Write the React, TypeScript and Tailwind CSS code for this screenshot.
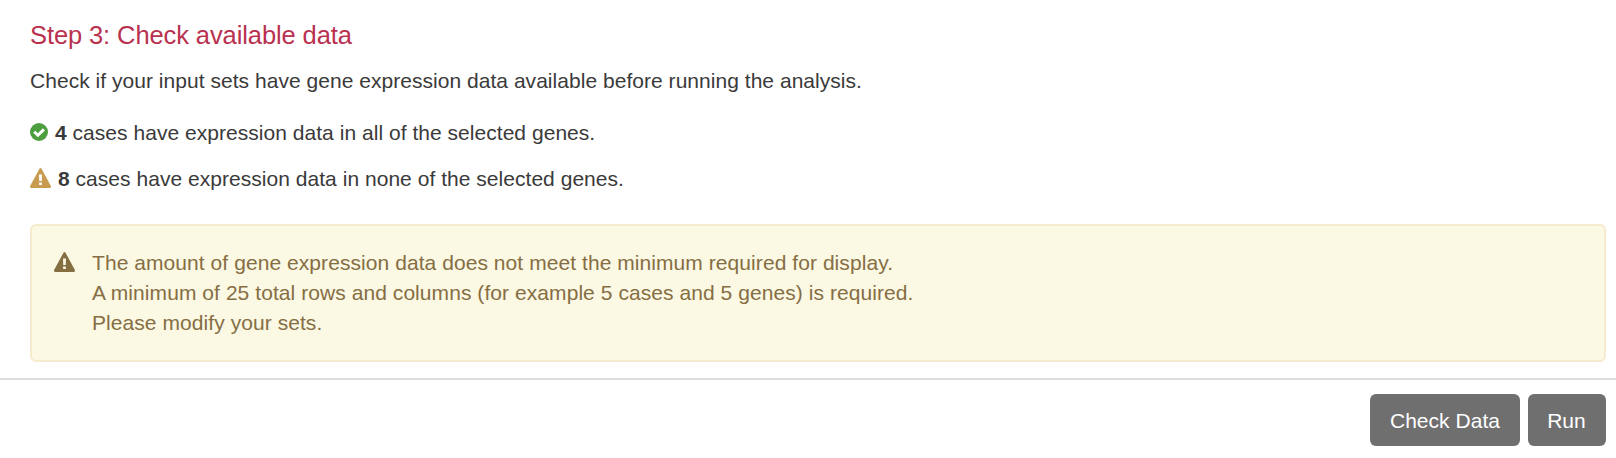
function CheckCircle() {
  return (
    <svg viewBox="0 0 18 18" className="mb-[2px] size-[18px] shrink-0" aria-hidden="true">
      <circle cx="9" cy="9" r="9" fill="#4c9e3f" />
      <path d="M4.2 8.8 L7.9 12.3 L13.9 6.4" fill="none" stroke="white" strokeWidth="2.9" strokeLinejoin="miter" strokeLinecap="butt" />
    </svg>
  );
}

function Warning({ className }: { className: string }) {
  return (
    <svg viewBox="0 0 21 20" className={className} aria-hidden="true">
      <path fillRule="evenodd" fill="currentColor" d="M9.6 .5Q10.5-.4 11.4 .5L20.9 18.1Q21.3 19.7 20 20H1Q-.3 19.7.1 18.1ZM9 6.6L9.2 12.9H11.8L12 6.6ZM9.1 14.4V17.1H11.9V14.4Z" />
    </svg>
  );
}

export default function App() {
  return (
    <main className="flex h-[458px] flex-col overflow-hidden bg-white font-['Liberation_Sans',Arial,sans-serif] text-[21px] tracking-[0.035px] text-[#3a3a3a]">
      <section className="flex flex-col pl-[30px] pr-[10px] pt-[18px]">
        <h2 className="h-[34px] text-[25.5px] leading-[34px] tracking-[-0.1px] text-[#b9314f]">Step 3: Check available data</h2>
        <p className="mt-[14px] leading-[30px]">Check if your input sets have gene expression data available before running the analysis.</p>
        <div className="mt-[22px] flex h-[30px] items-center gap-[7px]">
          <CheckCircle />
          <span><b>4</b> cases have expression data in all of the selected genes.</span>
        </div>
        <div className="mt-[16px] flex h-[30px] items-center gap-[7px]">
          <Warning className="mb-[2px] h-[20px] w-[21px] shrink-0 text-[#c99b50]" />
          <span><b>8</b> cases have expression data in none of the selected genes.</span>
        </div>
        <div className="mt-[30px] flex h-[138px] rounded-[6px] border-2 border-[#f7ebcf] bg-[#fbf8e4] pl-[22px] pt-[22px] tracking-[0.065px] text-[#866e43]">
          <Warning className="mt-[4px] h-[20px] w-[21px] shrink-0" />
          <p className="ml-[17px] leading-[30px]">The amount of gene expression data does not meet the minimum required for display.<br />A minimum of 25 total rows and columns (for example 5 cases and 5 genes) is required.<br />Please modify your sets.</p>
        </div>
      </section>
      <footer className="mt-[16px] flex justify-end gap-[8px] border-t-2 border-[#dddddd] pr-[10px] pt-[14px] text-white">
        <button className="h-[52px] w-[150px] rounded-[6px] bg-[#6f6f6f] pt-[2px]">Check Data</button>
        <button className="h-[52px] w-[78px] rounded-[6px] bg-[#6f6f6f] pr-px pt-[2px]">Run</button>
      </footer>
    </main>
  );
}
